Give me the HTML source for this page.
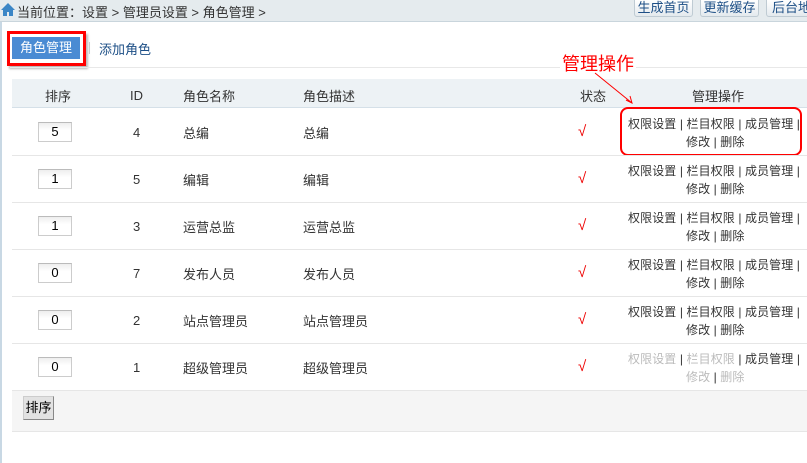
<!DOCTYPE html>
<html><head><meta charset="utf-8"><style>
*{margin:0;padding:0;box-sizing:border-box}
body{width:807px;height:463px;overflow:hidden;background:#fff;font-family:"Liberation Sans","Noto Sans CJK SC",sans-serif;font-size:12px;color:#333;position:relative}
.a{position:absolute;white-space:nowrap}
.c{font-size:13px}
.d{font-size:13px;margin-top:2px}
.top{left:0;top:0;width:807px;height:22px;background:#e5ebee;border-bottom:1px solid #c9d5dc}
.tb{top:0;height:17px;border:1px solid #bfcbd3;border-top:none;background:linear-gradient(#fff,#e4eaee);color:#1d4f86;font-size:13px;line-height:15px;text-align:center;border-radius:0 0 3px 3px}
.lb{left:0;top:22px;width:2px;height:441px;background:#c8d8e4}
.inp{width:34px;height:20px;border:1px solid #ccc;border-top-color:#bbb;background:linear-gradient(#eee,#fff 40%);text-align:center;line-height:18px;font-size:13px;color:#000}
.row{left:12px;width:795px;height:1px;background:#e6e6e6}
.ck{color:#e00;font-size:15px}
.op{font-size:12px;color:#333;line-height:18px;letter-spacing:0.1px}
.g{color:#bbb}
</style></head><body>
<div class="a top"></div>
<svg class="a" style="left:1px;top:3px" width="14" height="13" viewBox="0 0 14 13"><path d="M7 0L0 7h2v6h4V9h2v4h4V7h2z" fill="#3b86c6"/></svg>
<div class="a" style="left:17px;top:2px;font-size:13px;color:#333">当前位置：设置 &gt; 管理员设置 &gt; 角色管理 &gt;</div>
<div class="a tb" style="left:634px;width:59px">生成首页</div>
<div class="a tb" style="left:700px;width:59px">更新缓存</div>
<div class="a tb" style="left:766px;width:50px;text-align:left;padding-left:5px">后台地</div>
<div class="a lb"></div>

<div class="a" style="left:7px;top:31px;width:79px;height:35px;border:3px solid #f00;box-shadow:2px 3px 2px #bbb"></div>
<div class="a" style="left:12px;top:37px;width:68px;height:22px;background:#4a8bd3;color:#fff;font-size:13px;line-height:22px;text-align:center">角色管理</div>
<div class="a" style="left:89px;top:42px;width:1px;height:12px;background:#ccc"></div>
<div class="a" style="left:99px;top:39px;font-size:13px;color:#1d4f86">添加角色</div>
<div class="a" style="left:10px;top:67px;width:797px;height:1px;background:#e8e8e8"></div>

<div class="a" style="left:12px;top:79px;width:795px;height:29px;background:#edf2f5;border-bottom:1px solid #d5e0e8"></div>
<div class="a c" style="left:45px;top:86px">排序</div>
<div class="a d" style="left:130px;top:86px">ID</div>
<div class="a c" style="left:183px;top:86px">角色名称</div>
<div class="a c" style="left:303px;top:86px">角色描述</div>
<div class="a c" style="left:580px;top:86px">状态</div>
<div class="a c" style="left:692px;top:86px">管理操作</div>

<div class="a" style="left:560px;top:50px;font-size:18px;color:#f00;background:#fff;padding:0 2px">管理操作</div>
<svg class="a" style="left:590px;top:70px" width="50" height="40"><path d="M5 3L42 33M36 30l6 3-2-7" stroke="#f00" fill="none" stroke-width="1"/></svg>
<div class="a" style="left:620px;top:107px;width:182px;height:49px;border:2px solid #f00;border-radius:8px"></div>

<div class="a inp" style="left:38px;top:122px">5</div><div class="a d" style="left:133px;top:123px">4</div><div class="a c" style="left:183px;top:123px">总编</div><div class="a c" style="left:303px;top:123px">总编</div><div class="a ck" style="left:578px;top:123px">√</div>
<div class="a op" style="left:628px;top:115px">权限设置 | 栏目权限 | 成员管理 |</div><div class="a op" style="left:686px;top:133px">修改 | 删除</div>
<div class="a row" style="top:155px"></div>

<div class="a inp" style="left:38px;top:169px">1</div><div class="a d" style="left:133px;top:170px">5</div><div class="a c" style="left:183px;top:170px">编辑</div><div class="a c" style="left:303px;top:170px">编辑</div><div class="a ck" style="left:578px;top:170px">√</div>
<div class="a op" style="left:628px;top:162px">权限设置 | 栏目权限 | 成员管理 |</div><div class="a op" style="left:686px;top:180px">修改 | 删除</div>
<div class="a row" style="top:202px"></div>

<div class="a inp" style="left:38px;top:216px">1</div><div class="a d" style="left:133px;top:217px">3</div><div class="a c" style="left:183px;top:217px">运营总监</div><div class="a c" style="left:303px;top:217px">运营总监</div><div class="a ck" style="left:578px;top:217px">√</div>
<div class="a op" style="left:628px;top:209px">权限设置 | 栏目权限 | 成员管理 |</div><div class="a op" style="left:686px;top:227px">修改 | 删除</div>
<div class="a row" style="top:249px"></div>

<div class="a inp" style="left:38px;top:263px">0</div><div class="a d" style="left:133px;top:264px">7</div><div class="a c" style="left:183px;top:264px">发布人员</div><div class="a c" style="left:303px;top:264px">发布人员</div><div class="a ck" style="left:578px;top:264px">√</div>
<div class="a op" style="left:628px;top:256px">权限设置 | 栏目权限 | 成员管理 |</div><div class="a op" style="left:686px;top:274px">修改 | 删除</div>
<div class="a row" style="top:296px"></div>

<div class="a inp" style="left:38px;top:310px">0</div><div class="a d" style="left:133px;top:311px">2</div><div class="a c" style="left:183px;top:311px">站点管理员</div><div class="a c" style="left:303px;top:311px">站点管理员</div><div class="a ck" style="left:578px;top:311px">√</div>
<div class="a op" style="left:628px;top:303px">权限设置 | 栏目权限 | 成员管理 |</div><div class="a op" style="left:686px;top:321px">修改 | 删除</div>
<div class="a row" style="top:343px"></div>

<div class="a inp" style="left:38px;top:357px">0</div><div class="a d" style="left:133px;top:358px">1</div><div class="a c" style="left:183px;top:358px">超级管理员</div><div class="a c" style="left:303px;top:358px">超级管理员</div><div class="a ck" style="left:578px;top:358px">√</div>
<div class="a op" style="left:628px;top:350px"><span class="g">权限设置</span> | <span class="g">栏目权限</span> | 成员管理 |</div><div class="a op" style="left:686px;top:368px"><span class="g">修改</span> | <span class="g">删除</span></div>

<div class="a" style="left:12px;top:390px;width:795px;height:42px;background:#f5f5f5;border-top:1px solid #e6e6e6;border-bottom:1px solid #e6e6e6"></div>
<div class="a" style="left:23px;top:396px;width:31px;height:24px;border:1px solid #888;border-top-color:#ccc;border-left-color:#ccc;background:#e2e2e2;font-size:13px;color:#000;line-height:22px;text-align:center">排序</div>
</body></html>
